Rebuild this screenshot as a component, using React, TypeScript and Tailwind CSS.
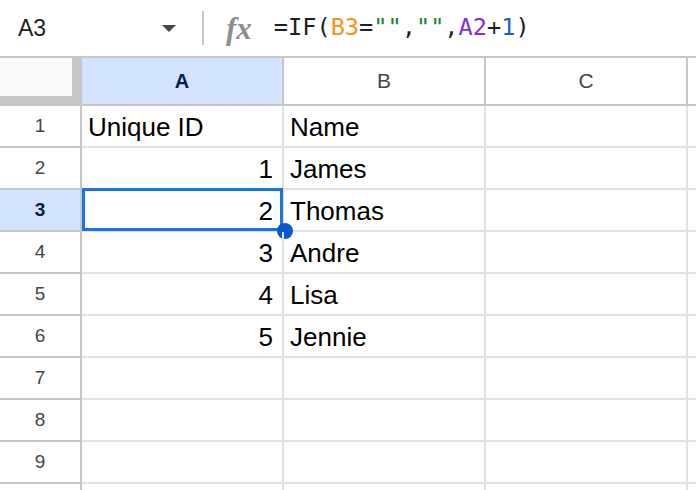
import React from "react";

const cols = ["A", "B", "C", "D"];

const rows: { id: string; name: string }[] = [
  { id: "Unique ID", name: "Name" },
  { id: "1", name: "James" },
  { id: "2", name: "Thomas" },
  { id: "3", name: "Andre" },
  { id: "4", name: "Lisa" },
  { id: "5", name: "Jennie" },
  { id: "", name: "" },
  { id: "", name: "" },
  { id: "", name: "" },
  { id: "", name: "" },
];

const App: React.FC = () => {
  return (
    <div
      className="w-[696px] h-[490px] overflow-hidden bg-white text-black"
      style={{ fontFamily: "Arial, 'Liberation Sans', sans-serif" }}
    >
      {/* formula bar */}
      <div className="h-[58px] flex items-center border-b-2 border-[#c7c7c7]">
        <div className="w-[202px] flex items-center pl-[18px] pr-[26px]">
          <span className="text-[23px] text-[#1f1f1f]">A3</span>
          <span className="ml-auto w-0 h-0 border-l-[7px] border-r-[7px] border-t-[7px] border-l-transparent border-r-transparent border-t-[#444746]" />
        </div>
        <div className="w-[2px] h-[34px] bg-[#c7c7c7]" />
        <span
          className="ml-[22px] text-[31px] italic font-bold text-[#8e8e8e] leading-none"
          style={{ fontFamily: "'Liberation Serif', serif" }}
        >
          fx
        </span>
        <span
          className="ml-[22px] text-[23.6px] leading-none text-[#1f1f1f]"
          style={{ fontFamily: "'DejaVu Sans Mono', monospace" }}
        >
          =IF(<span className="text-[#f6921e]">B3</span>=
          <span className="text-[#188038]">""</span>,
          <span className="text-[#188038]">""</span>,
          <span className="text-[#8430ce]">A2</span>+
          <span className="text-[#1a5fd1]">1</span>)
        </span>
      </div>

      {/* column headers */}
      <div className="flex h-[48px] border-b-2 border-[#c4c7c5]">
        <div className="w-[82px] shrink-0 bg-[#c7c7c7]">
          <div className="w-[72px] h-[38px] bg-[#f8f9fa]" />
        </div>
        {cols.map((c) => (
          <div
            key={c}
            className={
              c === "A"
                ? "w-[202px] shrink-0 flex items-center justify-center border-r-2 border-[#c4c7c5] bg-[#d3e3fd] text-[#041e49] font-bold text-[20px]"
                : "w-[202px] shrink-0 flex items-center justify-center border-r-2 border-[#c4c7c5] text-[#444746] text-[21px]"
            }
          >
            {c}
          </div>
        ))}
      </div>

      {/* grid */}
      {rows.map((r, i) => (
        <div key={i} className="flex h-[42px]">
          <div
            className={
              i === 2
                ? "w-[82px] shrink-0 flex items-center justify-center border-r-2 border-b-2 border-[#c4c7c5] bg-[#d3e3fd] text-[#041e49] font-bold text-[19px]"
                : "w-[82px] shrink-0 flex items-center justify-center border-r-2 border-b-2 border-[#c4c7c5] text-[#444746] text-[19px]"
            }
          >
            {i + 1}
          </div>
          <div
            className={
              i === 0
                ? "relative w-[202px] shrink-0 flex items-center pl-[6px] pt-[3px] border-r-2 border-b-2 border-[#e1e1e1] text-[26px]"
                : "relative w-[202px] shrink-0 flex items-center justify-end pr-[9px] pt-[3px] border-r-2 border-b-2 border-[#e1e1e1] text-[26px]"
            }
          >
            {r.id}
            {i === 2 && (
              <div className="absolute -top-[2px] left-0 -right-[1px] -bottom-[1px] border-[3px] border-[#1a73e8]">
                <div className="absolute -right-[13px] -bottom-[11px] w-[16px] h-[16px] rounded-full bg-[#0b57d0]" />
              </div>
            )}
          </div>
          <div className="w-[202px] shrink-0 flex items-center pl-[6px] pt-[3px] border-r-2 border-b-2 border-[#e1e1e1] text-[26px]">
            {r.name}
          </div>
          <div className="w-[202px] shrink-0 border-r-2 border-b-2 border-[#e1e1e1]" />
          <div className="w-[202px] shrink-0 border-r-2 border-b-2 border-[#e1e1e1]" />
        </div>
      ))}
    </div>
  );
};

export default App;
